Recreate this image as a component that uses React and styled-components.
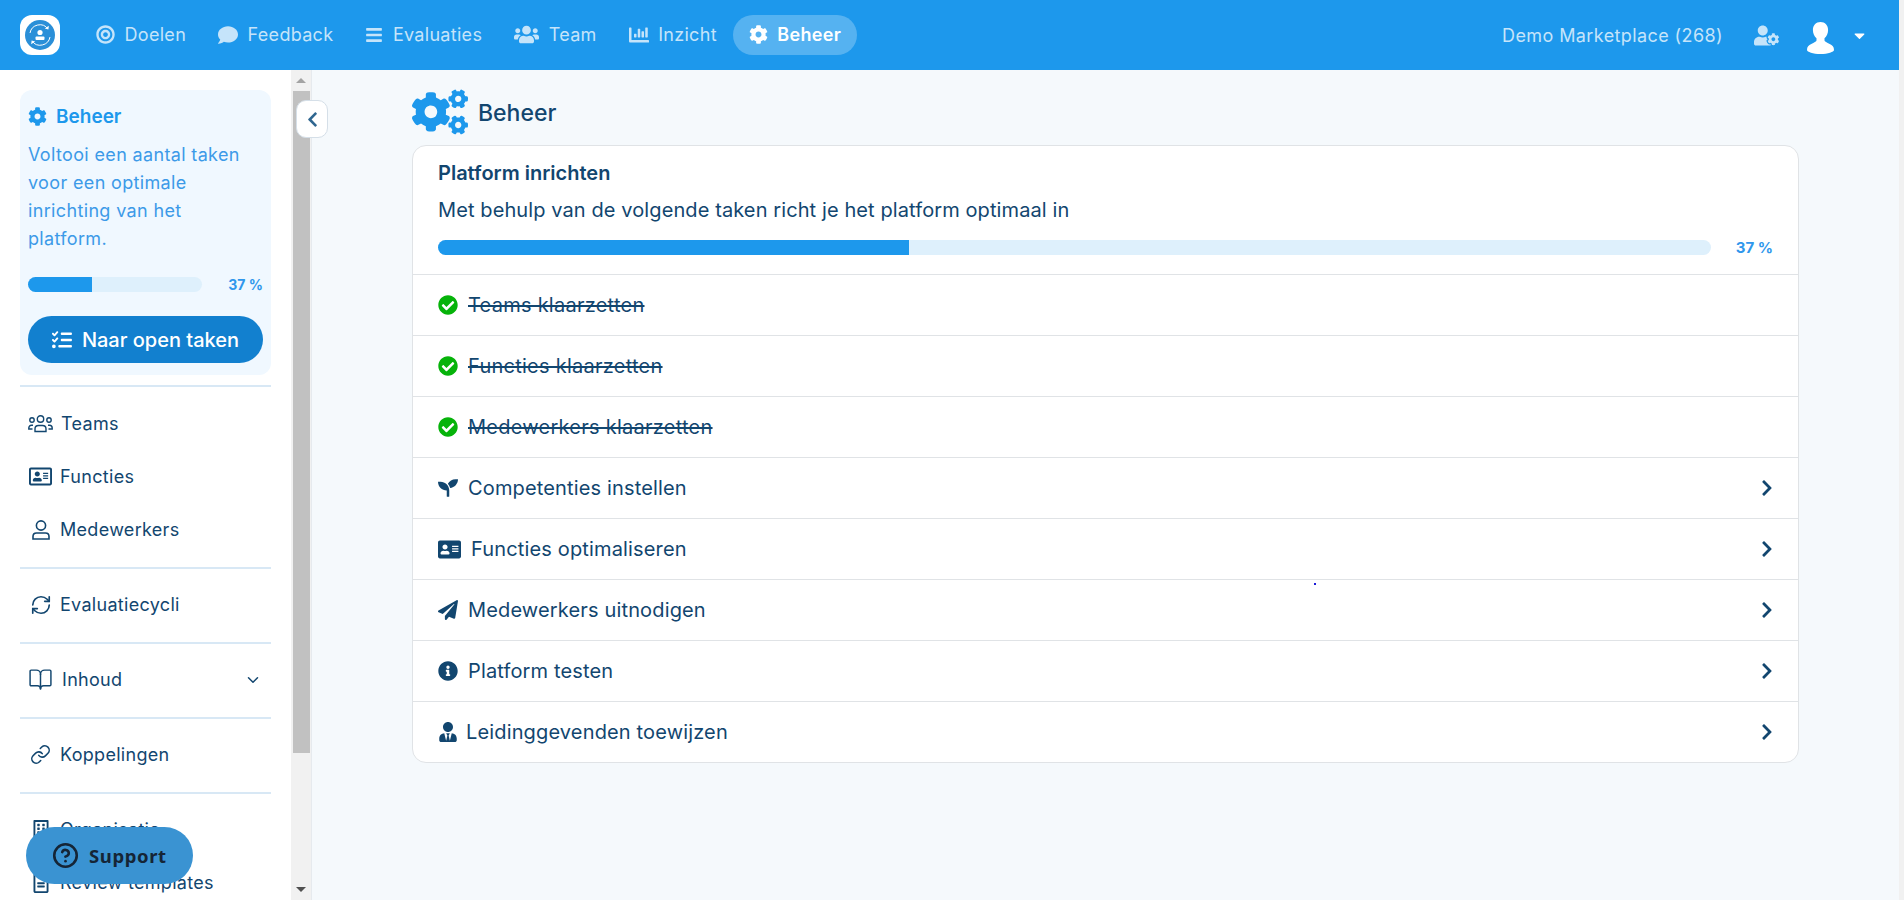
import React from "react";
import styled, { createGlobalStyle } from "styled-components";
import {
    FaBullseye,
    FaComment,
    FaBars,
    FaUsers,
    FaChartBar,
    FaCog,
    FaCogs,
    FaUserCog,
    FaCaretDown,
    FaCheckCircle,
    FaSeedling,
    FaAddressCard,
    FaPaperPlane,
    FaInfoCircle,
    FaUserTie,
    FaChevronRight,
    FaChevronLeft,
    FaRegAddressCard,
    FaRegBuilding,
    FaRegFileAlt,
} from "react-icons/fa";
import { FaListCheck } from "react-icons/fa6";
import { BookOpen, Link, RefreshCw, ChevronDown, CircleHelp } from "lucide-react";

const blue = "#1d98ec";
const navy = "#12466f";

const GlobalStyle = createGlobalStyle`
    html, body {
        margin: 0;
        height: 100%;
        overflow: hidden;
    }
    body {
        font-family: Inter, "Liberation Sans", sans-serif;
        color: ${navy};
    }
`;

const Page = styled.div`
    display: flex;
    height: 900px;
    padding-right: 5px;
    box-sizing: border-box;
    background: #f1f1f1;
`;

const Shell = styled.div`
    flex: 1;
    min-width: 0;
    display: flex;
    flex-direction: column;
`;

const TopBar = styled.header`
    height: 70px;
    flex: none;
    display: flex;
    align-items: center;
    padding: 0 31px 0 20px;
    background: ${blue};
`;

const Logo = styled.div`
    width: 40px;
    height: 40px;
    border-radius: 12px;
    background: white;
    display: flex;
    align-items: center;
    justify-content: center;
`;

const Nav = styled.nav`
    display: flex;
    align-items: center;
    margin-left: 20px;
`;

const NavItem = styled.a`
    display: flex;
    align-items: center;
    gap: 9.5px;
    height: 40px;
    box-sizing: border-box;
    padding: 0 16px 1px;
    border-radius: 20px;
    font-size: 18px;
    letter-spacing: 0.3px;
    color: ${(props) => (props.$active ? "white" : "#c5e4fa")};
    font-weight: ${(props) => (props.$active ? 600 : 400)};
    background: ${(props) => (props.$active ? "rgba(255,255,255,0.25)" : "transparent")};
`;

const TopRight = styled.div`
    margin-left: auto;
    display: flex;
    align-items: center;
    color: #c5e4fa;
    font-size: 18px;
    letter-spacing: 0.4px;
`;

const UserCog = styled(FaUserCog)`
    margin-left: 31px;
`;

const Avatar = styled.svg`
    margin: 6px 0 0 28px;
    width: 27px;
    height: 32px;
    display: block;
`;

const Caret = styled(FaCaretDown)`
    margin-left: 17px;
    color: white;
`;

const Body = styled.div`
    flex: 1;
    min-height: 0;
    display: flex;
    position: relative;
`;

const Sidebar = styled.aside`
    width: 291px;
    flex: none;
    background: white;
    padding: 20px 20px 0;
    box-sizing: border-box;
    overflow: hidden;
`;

const TaskCard = styled.div`
    height: 285px;
    box-sizing: border-box;
    padding: 14px 8px 0;
    border-radius: 12px;
    background: #f0f8ff;
`;

const TaskTitle = styled.div`
    display: flex;
    align-items: center;
    gap: 9px;
    height: 24px;
    font-size: 19px;
    font-weight: 600;
    color: ${blue};
`;

const TaskText = styled.p`
    margin: 13px 0 0;
    font-size: 18px;
    letter-spacing: 0.35px;
    line-height: 28px;
    color: #3c9ae8;
`;

const ProgressRow = styled.div`
    display: flex;
    align-items: center;
`;

const SideProgress = styled(ProgressRow)`
    margin-top: 24px;
`;

const Track = styled.div`
    flex: 1;
    height: 15px;
    border-radius: 8px;
    background: #def0fc;
    overflow: hidden;
`;

const Fill = styled.div`
    height: 100%;
    background: ${blue};
`;

const Percent = styled.span`
    flex: none;
    width: ${(props) => props.$width}px;
    text-align: right;
    font-size: ${(props) => props.$size}px;
    line-height: 15px;
    font-weight: 700;
    color: #2f97ec;
`;

const OpenButton = styled.button`
    display: flex;
    align-items: center;
    justify-content: center;
    gap: 10px;
    width: 235px;
    height: 47px;
    margin-top: 24px;
    border: none;
    border-radius: 24px;
    background: #1280cf;
    color: white;
    font-family: inherit;
    font-size: 20px;
    font-weight: 500;
`;

const Section = styled.div`
    padding: ${(props) => (props.$first ? "10px 0 11px" : "9px 0 11px")};
    border-bottom: 2px solid #d8e8f5;
    margin-top: ${(props) => (props.$first ? "10px" : "0")};
    border-top: ${(props) => (props.$first ? "2px solid #d8e8f5" : "none")};
`;

const LastSection = styled.div`
    padding-top: 9px;
`;

const MenuItem = styled.a`
    display: flex;
    align-items: center;
    height: 53px;
    padding: 0 9px 0 8px;
    gap: ${(props) => props.$gap || 7}px;
    font-size: 18px;
    letter-spacing: 0.3px;
    color: ${navy};
`;

const MenuIcon = styled.span`
    width: 25px;
    flex: none;
    display: flex;
    align-items: center;
    justify-content: center;
`;

const MenuChevron = styled(ChevronDown)`
    margin-left: auto;
`;

const FakeScroll = styled.div`
    width: 21px;
    flex: none;
    box-sizing: border-box;
    background: #f1f1f1;
    border-right: 1px solid #e6eaee;
    display: flex;
    flex-direction: column;
    align-items: center;
`;

const ScrollArrow = styled.div`
    height: ${(props) => props.$h}px;
    flex: none;
    display: flex;
    align-items: center;
    justify-content: center;
    &::before {
        content: "";
        border-left: 5px solid transparent;
        border-right: 5px solid transparent;
        border-bottom: ${(props) => (props.$down ? "0" : "5px solid #a3a3a3")};
        border-top: ${(props) => (props.$down ? "5px solid #505050" : "0")};
    }
`;

const ScrollThumb = styled.div`
    width: 17px;
    height: 662px;
    flex: none;
    background: #c1c1c1;
`;

const ScrollSpacer = styled.div`
    flex: 1;
`;

const CollapseButton = styled.button`
    position: absolute;
    left: 296px;
    top: 30px;
    width: 32px;
    height: 38px;
    padding: 0;
    border: 1px solid #d5dfe8;
    border-radius: 10px;
    background: white;
    color: #2f6690;
    display: flex;
    align-items: center;
    justify-content: center;
`;

const Main = styled.main`
    flex: 1;
    min-width: 0;
    background: #f5f9fc;
    padding: 19px 100px 0 100px;
`;

const Heading = styled.div`
    display: flex;
    align-items: center;
    gap: 10px;
    height: 45px;
    margin-bottom: 11px;
    font-size: 23px;
    font-weight: 500;
`;

const HeadingText = styled.span`
    padding-top: 3px;
`;

const Card = styled.section`
    background: white;
    border: 1px solid #e0e3e6;
    border-radius: 14px;
`;

const CardHead = styled.div`
    height: 128px;
    box-sizing: border-box;
    padding: 13px 25px 0;
`;

const CardTitle = styled.div`
    font-size: 20px;
    line-height: 28px;
    font-weight: 600;
`;

const CardText = styled.div`
    margin-top: 9px;
    font-size: 20px;
    letter-spacing: 0.1px;
    line-height: 28px;
`;

const CardProgress = styled(ProgressRow)`
    margin-top: 16px;
`;

const TaskRow = styled.div`
    display: flex;
    align-items: center;
    height: 61px;
    box-sizing: border-box;
    border-top: 1px solid #e0e3e6;
    padding: 0 25px;
    gap: ${(props) => props.$gap || 10}px;
    font-size: 20px;
    letter-spacing: ${(props) => (props.$done ? "0.25px" : "0.15px")};
    text-decoration: ${(props) => (props.$done ? "line-through" : "none")};
    text-decoration-thickness: 2px;
`;

const RowChevron = styled(FaChevronRight)`
    margin-left: auto;
    margin-right: -3px;
`;

const DoneIcon = styled(FaCheckCircle)`
    color: #06b30a;
    flex: none;
`;

const SupportButton = styled.button`
    position: fixed;
    left: 26px;
    bottom: 16px;
    width: 167px;
    height: 57px;
    border: none;
    border-radius: 29px;
    background: #3a93d2;
    color: #152536;
    display: flex;
    align-items: center;
    gap: 10px;
    padding: 0 0 0 26px;
    box-sizing: border-box;
    font-family: "Noto Sans", sans-serif;
    font-size: 18.5px;
    font-weight: 700;
    letter-spacing: 0.6px;
`;

const Speck = styled.div`
    position: fixed;
    left: 1314px;
    top: 583px;
    width: 2px;
    height: 2px;
    background: #1a1ad8;
`;

const LogoMark = () => (
    <svg width="30" height="30" viewBox="0 0 30 30">
        <circle cx="15" cy="15" r="15" fill="#2a8fd8" />
        <path d="M5 13a10 10 0 0 1 18-4" fill="none" stroke="white" strokeWidth="1" />
        <path d="M25 17a10 10 0 0 1-18 4" fill="none" stroke="white" strokeWidth="1" />
        <path d="M23.8 5.8l-.4 3.8-3.6-1z" fill="white" />
        <path d="M6.2 24.2l.4-3.8 3.6 1z" fill="white" />
        <circle cx="15" cy="12.5" r="2.6" fill="white" />
        <rect x="10.5" y="16.5" width="9" height="3.5" rx="1" fill="white" />
    </svg>
);

const AvatarIcon = () => (
    <Avatar viewBox="0 0 27 32">
        <path
            fill="white"
            d="M13.5 0c4.6 0 7.6 3.4 7.6 8 0 3.5-1.5 6.6-3.6 8.3v2.2c0 1 2.4 2.2 5.2 3.4 2.7 1.2 4.3 2.6 4.3 6.1 0 1.8-6 4-13.5 4S0 29.8 0 28c0-3.5 1.6-4.9 4.3-6.1 2.8-1.2 5.2-2.4 5.2-3.4v-2.2C7.400 14.600 5.900 11.500 5.900 8c0-4.600 3-8 7.600-8z"
        />
    </Avatar>
);

const TeamsIcon = () => (
    <svg width="25" height="18" viewBox="0 0 25 18" fill="none" stroke={navy} strokeWidth="1.400">
        <circle cx="12.500" cy="4" r="3.200" />
        <circle cx="4" cy="5" r="2.200" />
        <circle cx="21" cy="5" r="2.200" />
        <path d="M7 16.500v-2.500c0-2 1.500-3.500 3.500-3.500h4c2 0 3.500 1.500 3.500 3.500v2.500z" />
        <path d="M5 10.200H3.500C2 10.200.8 11.400.8 13v1h3.700" />
        <path d="M20 10.200h1.500c1.500 0 2.700 1.200 2.700 2.800v1h-3.700" />
    </svg>
);

const UserIcon = () => (
    <svg width="18" height="20" viewBox="0 0 18 20" fill="none" stroke={navy} strokeWidth="1.600">
        <circle cx="9" cy="5.500" r="4.600" />
        <path d="M1 19v-2.500c0-2 1.500-3.500 3.500-3.500h9c2 0 3.500 1.500 3.500 3.500V19z" />
    </svg>
);

const MENU = [
    [
        { label: "Teams", icon: <TeamsIcon />, gap: 8 },
        { label: "Functies", icon: <FaRegAddressCard size={23} /> },
        { label: "Medewerkers", icon: <UserIcon /> },
    ],
    [{ label: "Evaluatiecycli", icon: <RefreshCw size={22} strokeWidth={1.800} /> }],
    [{ label: "Inhoud", icon: <BookOpen size={25} strokeWidth={1.400} />, gap: 9, more: true }],
    [{ label: "Koppelingen", icon: <Link size={21} strokeWidth={1.800} /> }],
];

const TASKS = [
    { label: "Competenties instellen", icon: <FaSeedling size={20} /> },
    { label: "Functies optimaliseren", icon: <FaAddressCard size={23} /> },
    { label: "Medewerkers uitnodigen", icon: <FaPaperPlane size={20} /> },
    { label: "Platform testen", icon: <FaInfoCircle size={20} /> },
    { label: "Leidinggevenden toewijzen", icon: <FaUserTie size={20} />, gap: 8 },
];

const DONE = ["Teams klaarzetten", "Functies klaarzetten", "Medewerkers klaarzetten"];

export default function App() {
    return (
        <Page>
            <GlobalStyle />
            <Shell>
                <TopBar>
                    <Logo>
                        <LogoMark />
                    </Logo>
                    <Nav>
                        <NavItem><FaBullseye size={19} />Doelen</NavItem>
                        <NavItem><FaComment size={20} />Feedback</NavItem>
                        <NavItem><FaBars size={18} />Evaluaties</NavItem>
                        <NavItem><FaUsers size={25} />Team</NavItem>
                        <NavItem><FaChartBar size={20} />Inzicht</NavItem>
                        <NavItem $active><FaCog size={19} />Beheer</NavItem>
                    </Nav>
                    <TopRight>
                        Demo Marketplace (268)
                        <UserCog size={25} />
                        <AvatarIcon />
                        <Caret size={17} />
                    </TopRight>
                </TopBar>
                <Body>
                    <Sidebar>
                        <TaskCard>
                            <TaskTitle><FaCog size={19} />Beheer</TaskTitle>
                            <TaskText>Voltooi een aantal taken voor een optimale inrichting van het platform.</TaskText>
                            <SideProgress>
                                <Track><Fill style={{ width: "37%" }} /></Track>
                                <Percent $width={61} $size={14}>37 %</Percent>
                            </SideProgress>
                            <OpenButton><FaListCheck size={20} />Naar open taken</OpenButton>
                        </TaskCard>
                        {MENU.map((group, i) => (
                            <Section key={i} $first={i === 0}>
                                {group.map((item) => (
                                    <MenuItem key={item.label} $gap={item.gap}>
                                        <MenuIcon>{item.icon}</MenuIcon>
                                        {item.label}
                                        {item.more && <MenuChevron size={18} strokeWidth={2} />}
                                    </MenuItem>
                                ))}
                            </Section>
                        ))}
                        <LastSection>
                            <MenuItem><MenuIcon><FaRegBuilding size={20} /></MenuIcon>Organisatie</MenuItem>
                            <MenuItem><MenuIcon><FaRegFileAlt size={20} /></MenuIcon>Review templates</MenuItem>
                        </LastSection>
                    </Sidebar>
                    <FakeScroll>
                        <ScrollArrow $h={21} />
                        <ScrollThumb />
                        <ScrollSpacer />
                        <ScrollArrow $h={21} $down />
                    </FakeScroll>
                    <CollapseButton><FaChevronLeft size={17} /></CollapseButton>
                    <Main>
                        <Heading>
                            <FaCogs size={56} color={blue} />
                            <HeadingText>Beheer</HeadingText>
                        </Heading>
                        <Card>
                            <CardHead>
                                <CardTitle>Platform inrichten</CardTitle>
                                <CardText>Met behulp van de volgende taken richt je het platform optimaal in</CardText>
                                <CardProgress>
                                    <Track><Fill style={{ width: "37%" }} /></Track>
                                    <Percent $width={62} $size={15}>37 %</Percent>
                                </CardProgress>
                            </CardHead>
                            {DONE.map((label) => (
                                <TaskRow key={label} $done>
                                    <DoneIcon size={20} />
                                    {label}
                                </TaskRow>
                            ))}
                            {TASKS.map((task) => (
                                <TaskRow key={task.label} $gap={task.gap}>
                                    {task.icon}
                                    {task.label}
                                    <RowChevron size={18} />
                                </TaskRow>
                            ))}
                        </Card>
                    </Main>
                </Body>
            </Shell>
            <SupportButton>
                <CircleHelp size={27} strokeWidth={2.300} />
                Support
            </SupportButton>
            <Speck />
        </Page>
    );
}
